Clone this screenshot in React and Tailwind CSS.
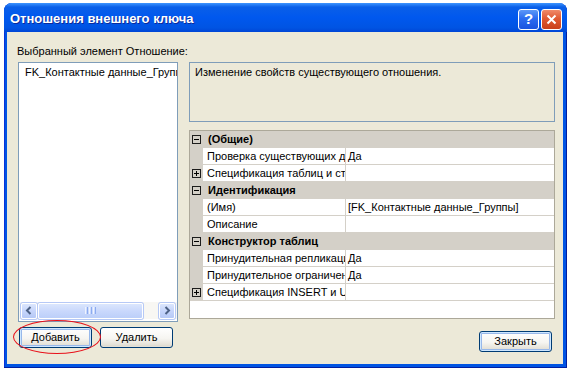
import React from "react"

const font = "font-['Liberation_Sans',Arial,sans-serif]"

const rows = [
  { type: "cat", text: "(Общие)" },
  { type: "prop", name: "Проверка существующих данных при создании", value: "Да" },
  { type: "prop", name: "Спецификация таблиц и столбцов", value: "", plus: true },
  { type: "cat", text: "Идентификация" },
  { type: "prop", name: "(Имя)", value: "[FK_Контактные данные_Группы]" },
  { type: "prop", name: "Описание", value: "" },
  { type: "cat", text: "Конструктор таблиц" },
  { type: "prop", name: "Принудительная репликация", value: "Да" },
  { type: "prop", name: "Принудительное ограничение внешнего ключа", value: "Да" },
  { type: "prop", name: "Спецификация INSERT и UPDATE", value: "", plus: true },
]

function ToggleBox({ plus }) {
  return (
    <span className="relative flex h-[9px] w-[9px] items-center justify-center border border-[#1c1c1c]">
      <span className="h-px w-[5px] bg-black" />
      {plus && <span className="absolute h-[5px] w-px bg-black" />}
    </span>
  )
}

function XpButton({ children, focused }) {
  return (
    <button
      className={
        "flex h-[21px] w-[73px] items-center justify-center rounded-[3px] border border-[#003c74] text-[11px] leading-[13px] text-black bg-[linear-gradient(180deg,#ffffff_0%,#f6f5f1_55%,#e3e0d6_90%,#d6d0c5_100%)] " +
        (focused
          ? "shadow-[inset_0_0_0_1px_#cee7ff,inset_0_0_0_2px_#98b8ea]"
          : "shadow-[inset_0_-1px_0_#e3e0d6]")
      }
    >
      {children}
    </button>
  )
}

function Chevron({ dir }) {
  return (
    <svg width="8" height="9" viewBox="0 0 8 9">
      <polyline
        points={dir === "left" ? "5.5,1 2,4.5 5.5,8" : "2.5,1 6,4.5 2.5,8"}
        fill="none"
        stroke="#4d6185"
        strokeWidth="2"
      />
    </svg>
  )
}

function ScrollBtn({ dir }) {
  return (
    <div className="flex h-[16px] w-[16px] items-center justify-center rounded-[2px] border border-white bg-[linear-gradient(180deg,#dbe6fd_0%,#c6d5fb_50%,#b6c9f6_100%)] shadow-[0_0_0_1px_#b6c9f6]">
      <Chevron dir={dir} />
    </div>
  )
}

export default function App() {
  return (
    <div className={"relative h-[371px] w-[572px] overflow-hidden bg-white pl-[4px] pt-[3px] " + font}>
      <div className="flex h-[365px] w-[563px] flex-col overflow-hidden rounded-t-[8px] bg-[#0054e3] shadow-[inset_-1px_-1px_0_#001ea0,inset_1px_0_0_#0831d9]">
        <div className="flex h-[29px] items-center justify-between bg-[linear-gradient(180deg,#3d95ff_0%,#0a5fe8_14%,#0058ee_50%,#0054e3_85%,#0046d6_100%)] pl-[6px] pr-[5px] pt-[3px]">
          <span className="text-[13px] font-bold leading-[16px] text-white [text-shadow:1px_1px_0_#0c2b9b]">
            Отношения внешнего ключа
          </span>
          <div className="flex gap-[2px]">
            <div className="flex h-[21px] w-[21px] items-center justify-center rounded-[3px] border border-white bg-[linear-gradient(180deg,#5d98f7_0%,#2c6cf0_45%,#1a54e0_100%)]">
              <span className="text-[15px] font-bold leading-[16px] text-white">?</span>
            </div>
            <div className="flex h-[21px] w-[21px] items-center justify-center rounded-[3px] border border-white bg-[linear-gradient(180deg,#f08a6a_0%,#e05a33_45%,#c9401b_100%)]">
              <svg width="11" height="11" viewBox="0 0 11 11">
                <path d="M1.5 1.5 L9.5 9.5 M9.5 1.5 L1.5 9.5" stroke="white" strokeWidth="2" />
              </svg>
            </div>
          </div>
        </div>

        <div className="mb-[4px] ml-[3px] mr-[4px] flex flex-1 flex-col bg-[#ece9d8] pt-[13px] text-[11px] leading-[13px] text-black">
          <div className="pl-[10px]">Выбранный элемент Отношение:</div>
          <div className="mt-[4px] flex pl-[11px]">
            <div className="flex w-[160px] flex-col">
              <div className="flex h-[260px] flex-col border border-[#7f9db9] bg-white">
                <div className="flex-1 overflow-hidden whitespace-nowrap pl-[6px] pt-[3px]">
                  FK_Контактные данные_Группы
                </div>
                <div className="mb-[2px] flex h-[17px] items-center gap-px bg-[#f8f7f3] px-[2px]">
                  <ScrollBtn dir="left" />
                  <div className="flex h-[16px] w-[105px] items-center justify-center gap-px rounded-[2px] border border-white bg-[linear-gradient(180deg,#dbe6fd_0%,#c9d8fc_50%,#bccff9_100%)] shadow-[0_0_0_1px_#b6c9f6]">
                    <span className="h-[7px] w-px bg-[#eef3fe]" />
                    <span className="h-[7px] w-px bg-[#8cabf0]" />
                    <span className="h-[7px] w-px bg-[#eef3fe]" />
                    <span className="h-[7px] w-px bg-[#8cabf0]" />
                    <span className="h-[7px] w-px bg-[#eef3fe]" />
                    <span className="h-[7px] w-px bg-[#8cabf0]" />
                  </div>
                  <div className="flex-1" />
                  <ScrollBtn dir="right" />
                </div>
              </div>
              <div className="mt-[5px] flex gap-[8px] pl-px">
                <XpButton focused>Добавить</XpButton>
                <XpButton>Удалить</XpButton>
              </div>
            </div>

            <div className="ml-[11px] flex w-[366px] flex-col">
              <div className="h-[60px] border border-[#7f9db9] pl-[5px] pt-[3px]">
                Изменение свойств существующего отношения.
              </div>
              <div className="mt-[8px] flex h-[189px] flex-col border border-[#aca899] bg-white">
                {rows.map((r, i) =>
                  r.type === "cat" ? (
                    <div key={i} className="flex h-[17px] items-center bg-[#d4d0c8]">
                      <div className="flex w-[13px] justify-center">
                        <ToggleBox />
                      </div>
                      <span className="pl-[5px] font-bold">{r.text}</span>
                    </div>
                  ) : (
                    <div key={i} className="flex h-[17px]">
                      <div className="flex w-[13px] items-center justify-center bg-[#d4d0c8]">
                        {r.plus && <ToggleBox plus />}
                      </div>
                      <div className="flex w-[143px] items-center overflow-hidden whitespace-nowrap border-b border-r border-[#d4d0c8] pl-[4px]">
                        {r.name}
                      </div>
                      <div className="flex flex-1 items-center overflow-hidden whitespace-nowrap border-b border-[#d4d0c8] pl-[2px]">
                        {r.value}
                      </div>
                    </div>
                  )
                )}
              </div>
              <div className="mr-[3px] mt-[12px] flex justify-end">
                <XpButton focused>Закрыть</XpButton>
              </div>
            </div>
          </div>
        </div>
      </div>

      <div className="absolute left-[13px] top-[320px] h-[34px] w-[88px] rounded-[50%] border border-[#e8101a]" />
    </div>
  )
}
